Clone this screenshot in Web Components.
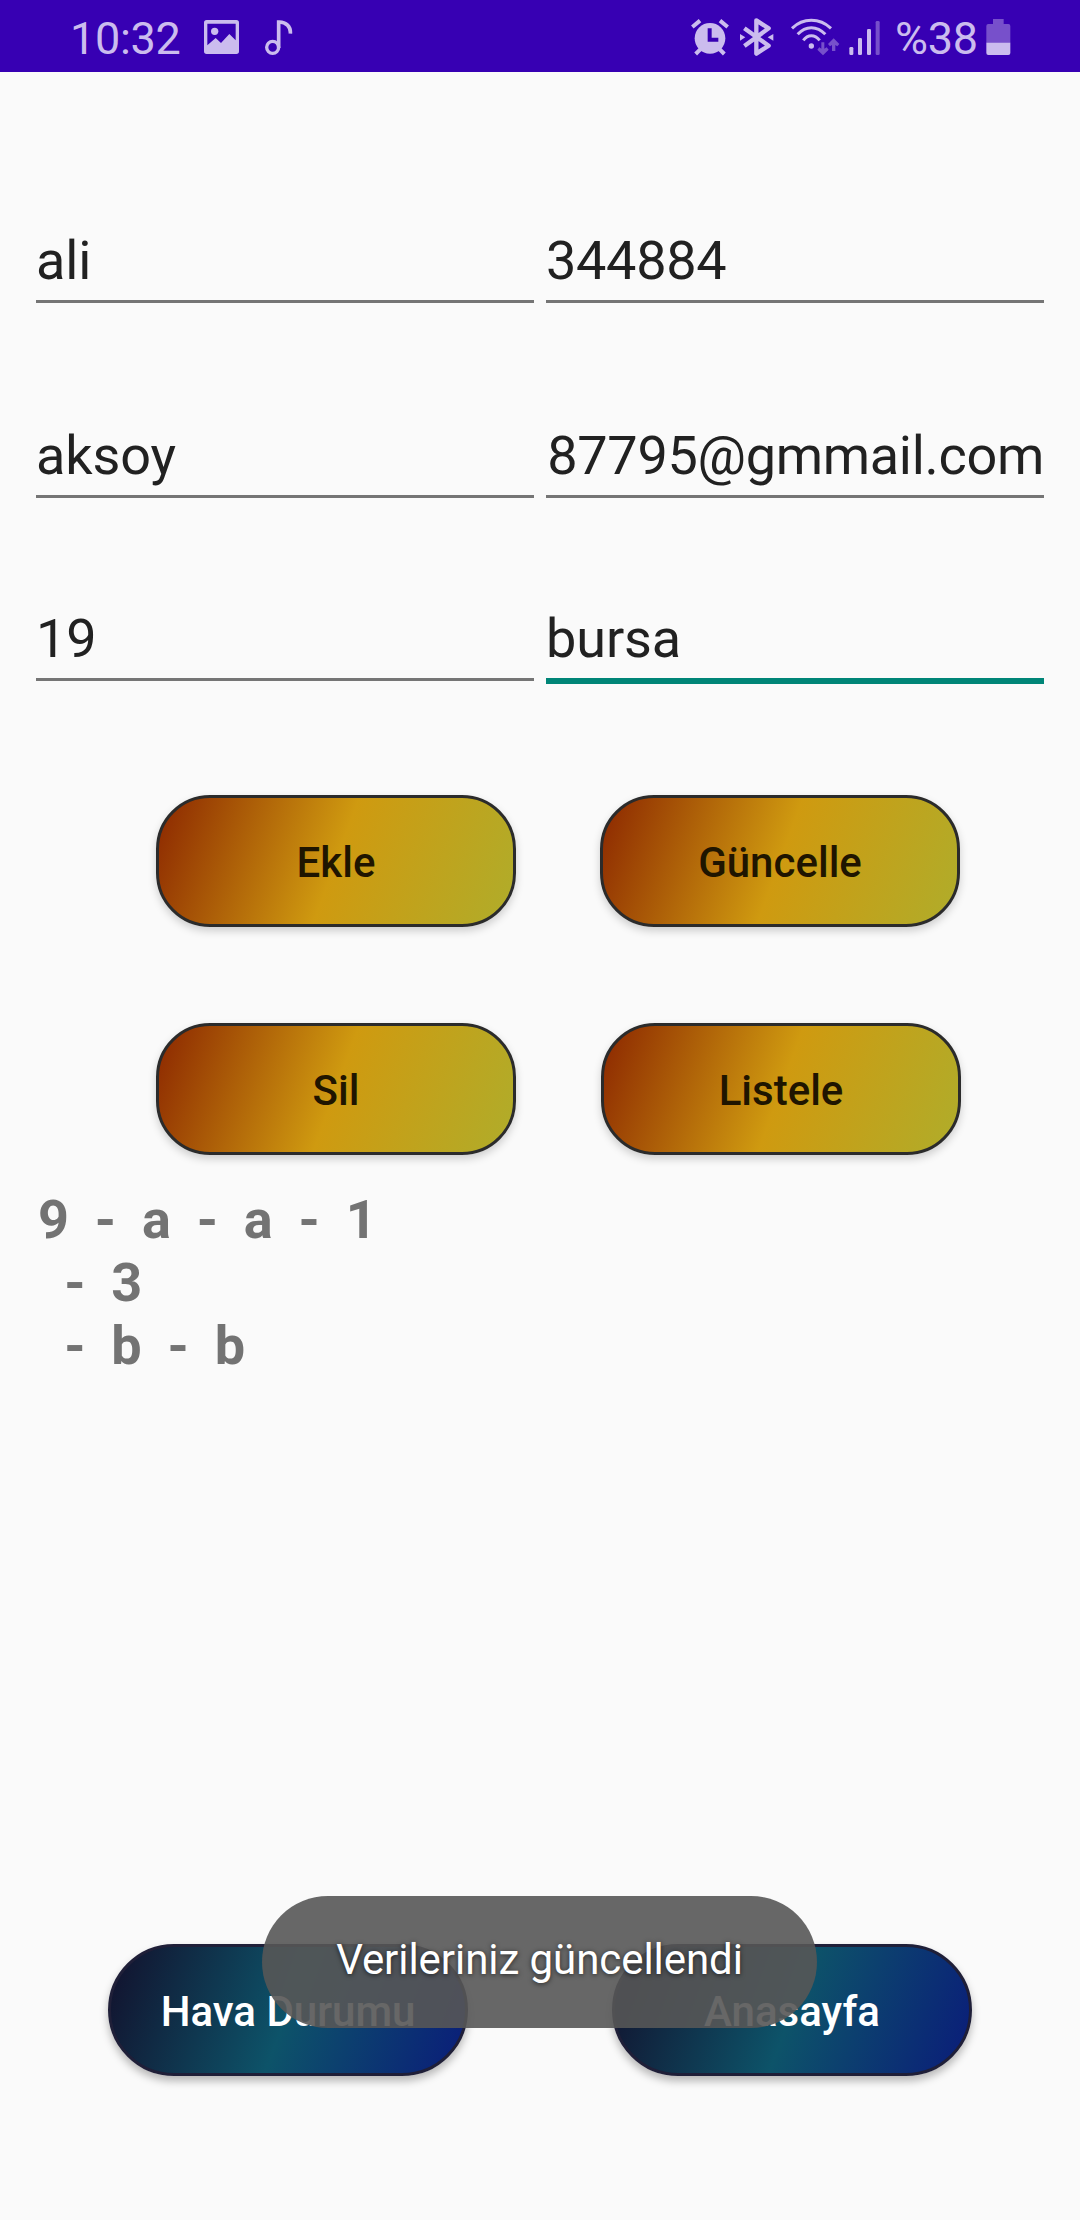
<!DOCTYPE html>
<html lang="tr">
<head>
<meta charset="utf-8">
<title>Kayıt</title>
<style>
html,body{margin:0;padding:0}
body{width:1080px;height:2220px;background:#fafafa;font-family:Roboto,"Liberation Sans",sans-serif;overflow:hidden}
</style>
</head>
<body>
<record-screen></record-screen>
<script>
function define(name, html) {
  const template = document.createElement('template');
  template.innerHTML = html;
  customElements.define(name, class extends HTMLElement {
    constructor() {
      super();
      this.attachShadow({mode: 'open'}).append(template.content.cloneNode(true));
    }
  });
}

define('status-bar', `
<style>
:host{display:flex;justify-content:space-between;box-sizing:border-box;height:72px;padding:0 69px 0 70px;background:#3700b3;color:#cbbcee;font-size:45px;line-height:53px;letter-spacing:-.3px}
.group{display:flex;align-items:flex-start}
svg{display:block;flex:none;fill:#cbbcee}
.text{padding-top:12px;white-space:pre}
.dim{fill:#7750cb}
.line{fill:none;stroke:#cbbcee}
</style>
<div class="group">
  <span class="text" style="width:134px">10:32</span>
  <svg style="margin-top:20px" width="35" height="34" viewBox="432 60 105 102"><path fill-rule="evenodd" d="M440 60H529Q537 60 537 68V154Q537 162 529 162H440Q432 162 432 154V68Q432 60 440 60ZM442 71V136L467 114L483 129L508 102L527 121V71Z"/><circle cx="464" cy="94" r="11"/></svg>
  <svg style="margin:20px 0 0 26px" width="28" height="36" viewBox="615 60 84 108"><circle class="line" cx="638" cy="142" r="18" stroke-width="10"/><path class="line" stroke-width="11" d="M656 144V66C678 65 693 80 691 101"/></svg>
</div>
<div class="group">
  <svg style="margin-top:18px" width="39" height="38" viewBox="60 54 117 114"><circle cx="117" cy="115" r="46"/><path d="M116 85V119H142" fill="none" stroke="#3700b3" stroke-width="12"/><path class="line" stroke-width="12" d="M64 81L87 62M147 62L170 81M74 162L90 146M144 146L160 162"/></svg>
  <svg style="margin:18px 0 0 10px" width="34" height="38" viewBox="207 54 102 114"><path class="line" stroke-width="13" stroke-linejoin="round" d="M220 85L293 137L256 161V61L293 85L220 138"/><path d="M207 102L223 112L207 122ZM307 102L290 112L307 122Z"/></svg>
  <svg style="margin:18px 0 0 16px" width="50" height="38" viewBox="357 54 150 114"><path class="line" stroke-width="9" d="M363 85Q388 61 421 61T480 85M380 103Q398 83 421 83T463 103M397 121Q407 107 421 107T446 121"/><circle cx="421" cy="138" r="8"/><path class="dim" d="M451 127H460V146L467 142L473 149L456 166L439 149L445 142L451 146ZM483 153V135L477 139L471 132L488 115L505 132L499 139L493 135V153Z"/></svg>
  <svg style="margin:21px 0 0 9px" width="32" height="34" viewBox="533 63 96 102"><rect x="534" y="141" width="12" height="24" rx="4"/><rect x="560" y="114" width="12" height="51" rx="4"/><rect x="587" y="87" width="12" height="78" rx="4"/><rect class="dim" x="613" y="63" width="12" height="102" rx="4"/></svg>
  <span class="text" style="margin-left:14px;width:91px">%38</span>
  <svg style="margin-top:19px" width="25" height="36" viewBox="947 57 75 108"><path class="dim" d="M968 57H1000V72H1014Q1020 72 1020 78V129H948V78Q948 72 954 72H968Z"/><path d="M948 128H1020V159Q1020 165 1014 165H954Q948 165 948 159Z"/></svg>
</div>`);

define('text-field', `
<style>
:host{display:block;box-sizing:border-box;height:77px;color:#212121;font-size:54px;line-height:63px;white-space:nowrap;letter-spacing:-.1px}
.box{height:71px;border-bottom:3px solid #757575}
:host([focused]) .box{border-bottom:6px solid #008577}
:host([tight]){letter-spacing:-.3px}
:host([scrolled]) .box{text-align:right}
</style>
<div class="box"><slot></slot></div>`);

define('pill-button', `
<style>
:host{display:flex;align-items:center;justify-content:center;box-sizing:border-box;width:360px;height:132px;border-radius:54px;border:3px solid #2b2b2b;background:linear-gradient(110.1deg,#8b2500,#cf9a10 50%,#afad2b) border-box;color:#1f1500;font-size:42px;line-height:50px;font-weight:500;padding-top:4px;box-shadow:0 4px 8px rgba(0,0,0,.18)}
:host([nav]){border-color:#1f1f38;border-radius:66px;background:linear-gradient(110.1deg,#120f2b,#0d5369 50%,#0a1b7a) border-box;color:#fff;box-shadow:0 5px 9px rgba(0,0,0,.28)}
</style>
<slot></slot>`);

define('toast-message', `
<style>
:host{display:flex;align-items:center;justify-content:center;box-sizing:border-box;width:555px;height:132px;border-radius:66px;background:rgba(86,86,86,.9);color:#fff;font-size:42px;line-height:50px;letter-spacing:-.06px;padding-bottom:4px;text-shadow:0 1px 5px rgba(0,0,0,.65)}
</style>
<slot></slot>`);

define('record-screen', `
<style>
:host{display:flex;flex-direction:column;position:relative;height:2220px}
.fields{display:grid;grid-template-columns:498px 498px;column-gap:12px;padding:157px 36px 0;grid-template-rows:195px 183px 77px}
.actions{display:grid;grid-template-columns:360px 361px;column-gap:84px;row-gap:96px;padding:111px 0 0 156px}
.shift{margin-left:1px}
.list{margin:33px 36px 0 38px;color:#737373;font-weight:700;font-size:54px;line-height:63px;letter-spacing:-.33px;white-space:pre}
.nav{display:flex;justify-content:space-between;margin:auto 108px 144px}
toast-message{position:absolute;left:262px;top:1896px}
</style>
<status-bar></status-bar>
<div class="fields">
  <text-field>ali</text-field><text-field tight>344884</text-field>
  <text-field>aksoy</text-field><text-field tight scrolled>87795@gmmail.com</text-field>
  <text-field>19</text-field><text-field focused>bursa</text-field>
</div>
<div class="actions">
  <pill-button>Ekle</pill-button><pill-button>Güncelle</pill-button>
  <pill-button>Sil</pill-button><pill-button class="shift">Listele</pill-button>
</div>
<div class="list">9  -  a  -  a  -  1
  -  3
  -  b  -  b</div>
<div class="nav"><pill-button nav>Hava Durumu</pill-button><pill-button nav>Anasayfa</pill-button></div>
<toast-message>Verileriniz güncellendi</toast-message>`);
</script>
</body>
</html>
